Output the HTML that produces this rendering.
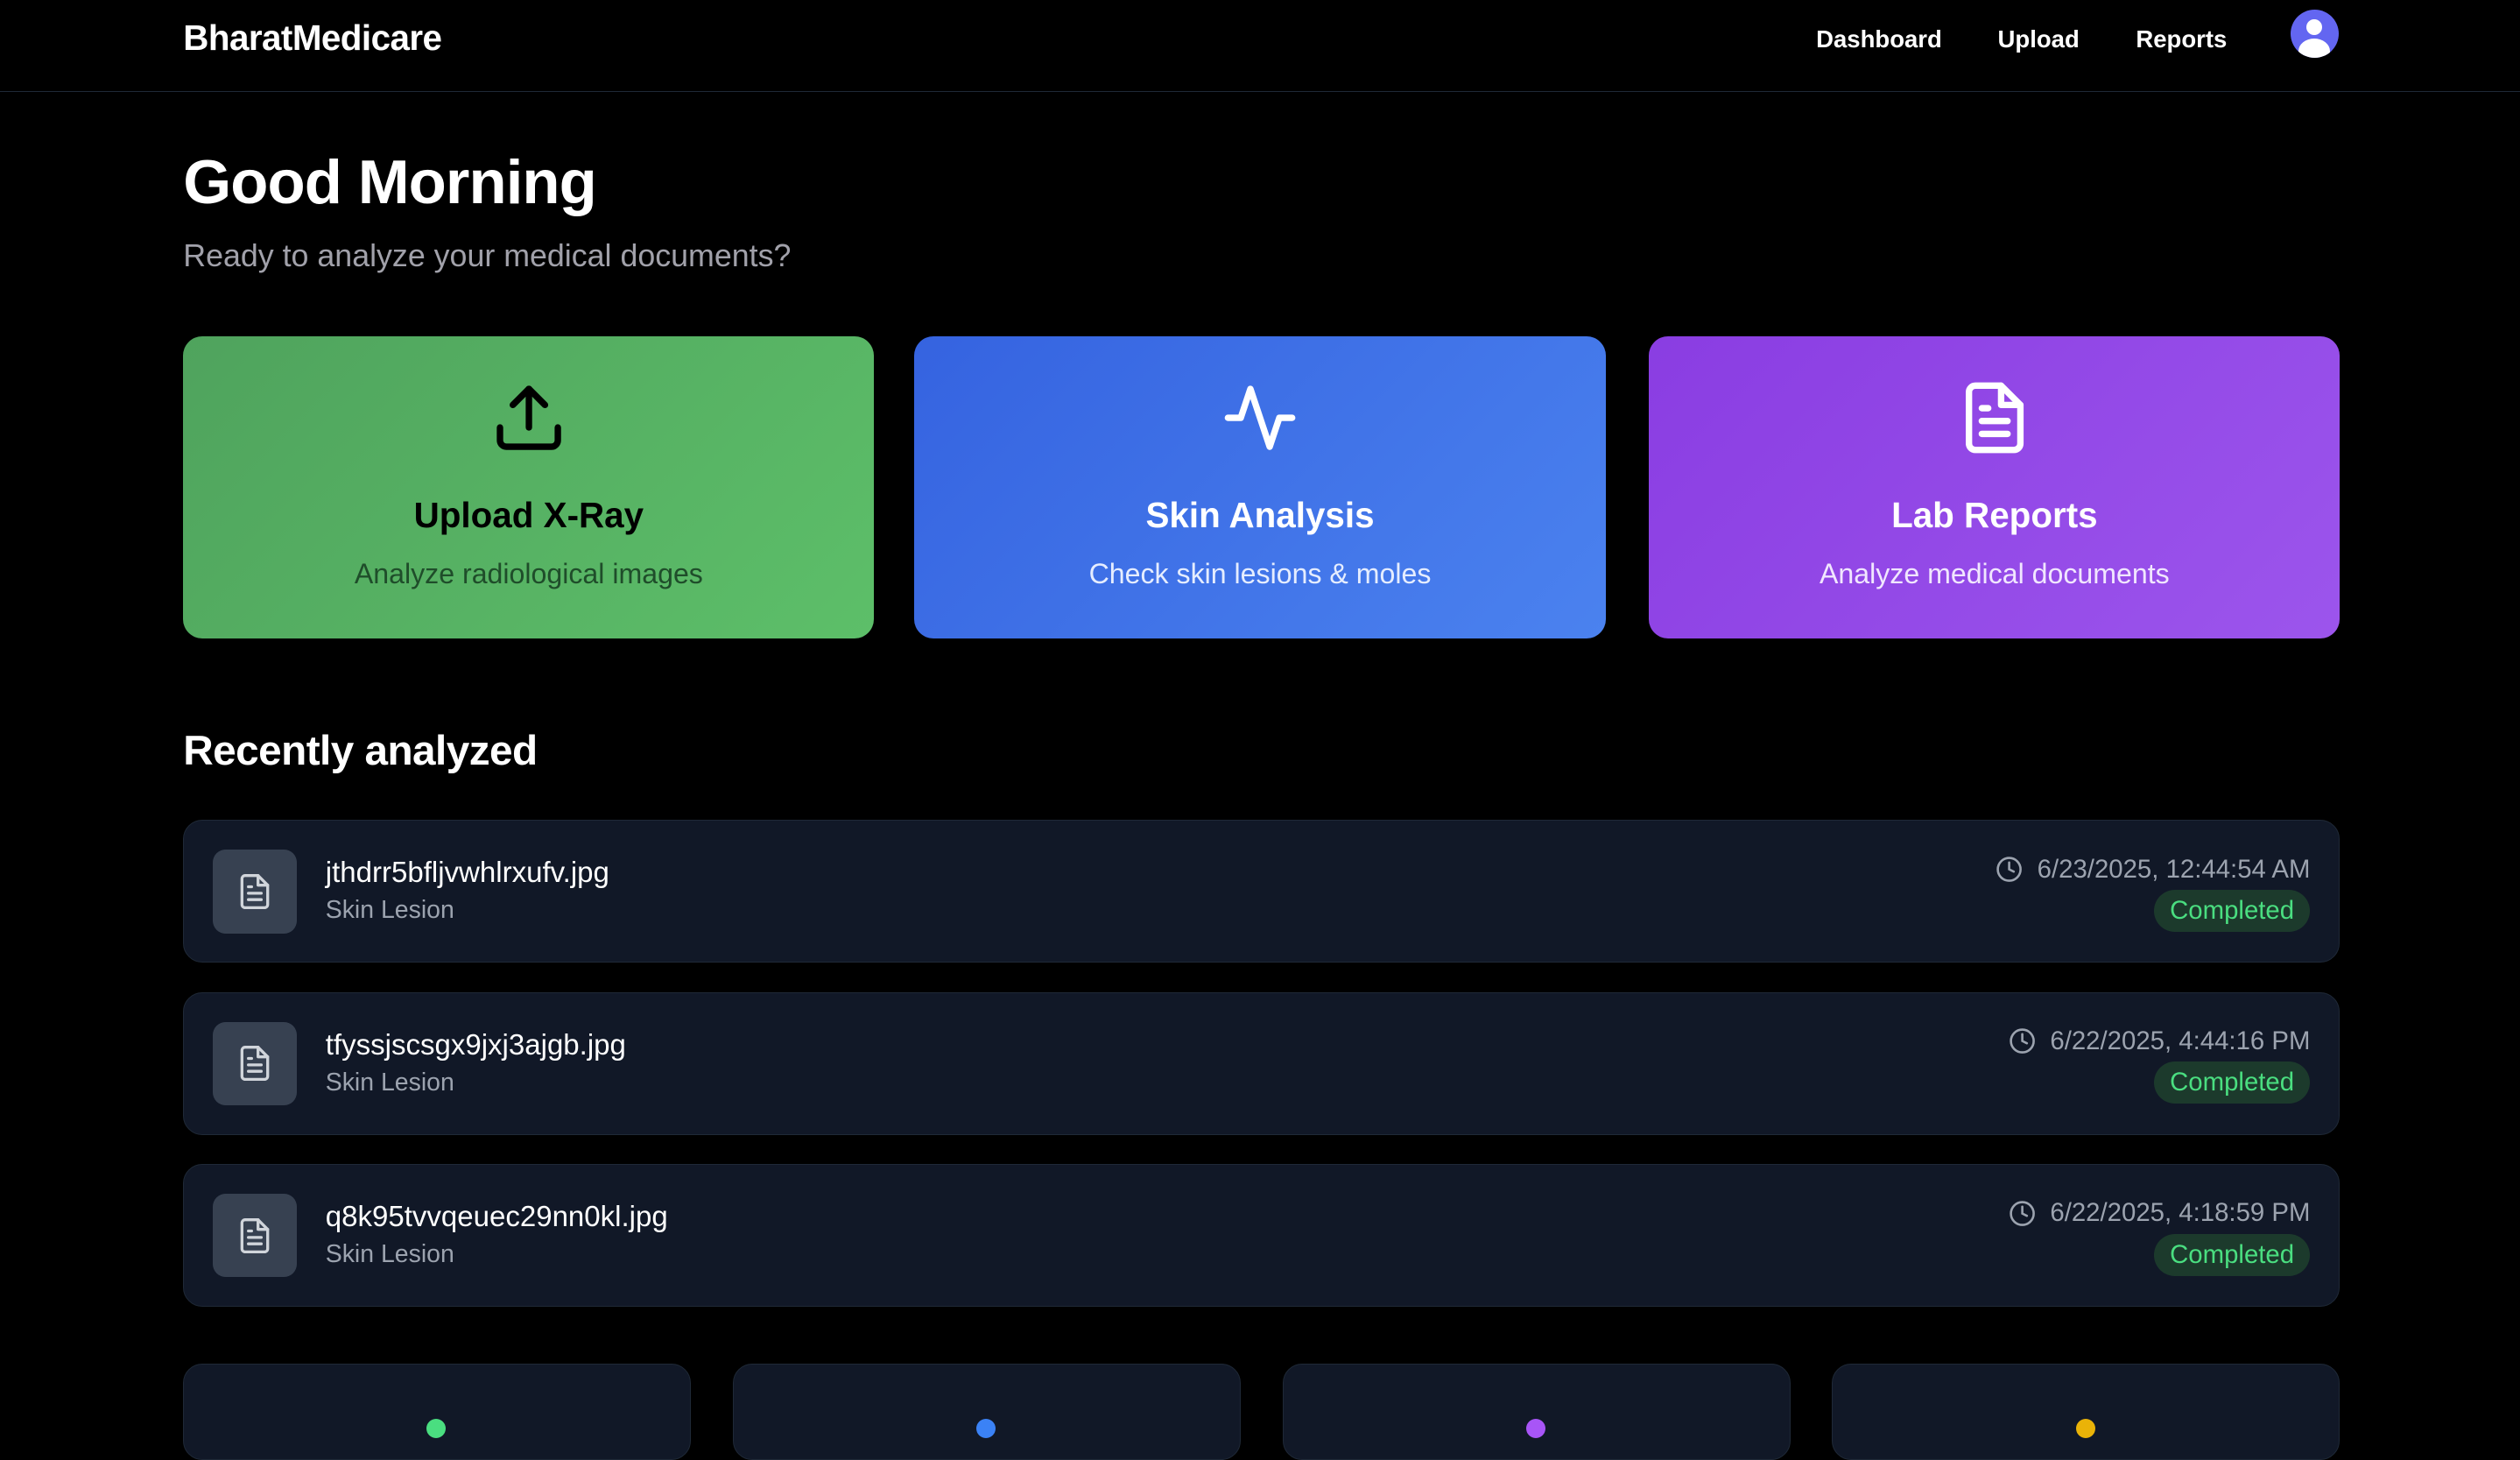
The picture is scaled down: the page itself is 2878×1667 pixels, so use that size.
<!DOCTYPE html>
<html><head><meta charset="utf-8"><style>
html{zoom:1.8355}
*{box-sizing:border-box;margin:0;padding:0}
body{background:#000;width:1568px;height:884px;overflow:hidden;font-family:"Liberation Sans",sans-serif;color:#fff;position:relative}
.nav{position:absolute;left:0;top:0;width:1568px;height:57px;border-bottom:1px solid #1f2937}
.logo{position:absolute;left:114px;top:11px;font-size:22px;font-weight:bold;letter-spacing:-0.3px}
.nl{position:absolute;top:16px;font-size:15px;font-weight:bold}
.av{position:absolute;left:1425px;top:6px;width:30px;height:30px;border-radius:50%;background:#6366f1;overflow:hidden}
h1{position:absolute;left:114px;top:91px;font-size:38.5px;font-weight:bold;letter-spacing:-0.5px}
.sub{position:absolute;left:114px;top:148px;font-size:19.5px;color:#a1a1aa}
.card{position:absolute;top:209px;width:430px;height:188px;border-radius:12px;text-align:center}
.card svg{position:absolute;left:191px;top:27px}
.card .t{position:absolute;left:0;right:0;top:99px;font-size:22px;font-weight:bold}
.card .s{position:absolute;left:0;right:0;top:138px;font-size:17.5px}
h2{position:absolute;left:114px;top:452px;font-size:26px;font-weight:bold;letter-spacing:-0.3px}
.row{position:absolute;left:114px;width:1342px;height:89px;background:#111827;border:1px solid #1f2937;border-radius:12px}
.ib{position:absolute;left:18px;top:18px;width:52px;height:52px;border-radius:8px;background:#374151}
.ib svg{position:absolute;left:14px;top:14px}
.fn{position:absolute;left:88px;top:22px;font-size:18px}
.ft{position:absolute;left:88px;top:47px;font-size:15.5px;color:#9ca3af}
.dt{position:absolute;right:18px;top:21px;font-size:16px;color:#9ca3af;display:flex;align-items:center;gap:9px}
.bd{position:absolute;right:18px;top:43px;height:26px;padding:0 10px;line-height:26px;border-radius:13px;background:#1c3a2c;color:#4ade80;font-size:16px}
.bc{position:absolute;top:848px;width:316px;height:60px;background:#111827;border:1px solid #1f2937;border-radius:12px}
.dot{position:absolute;left:151px;top:34px;width:12px;height:12px;border-radius:50%}
</style></head><body>
<div class="nav">
<div class="logo">BharatMedicare</div>
<div class="nl" style="left:1130px">Dashboard</div>
<div class="nl" style="left:1243px">Upload</div>
<div class="nl" style="left:1329px">Reports</div>
<div class="av"><div style="position:absolute;left:10px;top:6px;width:10px;height:10px;border-radius:50%;background:#fff"></div><div style="position:absolute;left:5px;top:18px;width:20px;height:16px;border-radius:50%;background:#fff"></div></div>
</div>
<h1>Good Morning</h1>
<div class="sub">Ready to analyze your medical documents?</div>

<div class="card" style="left:114px;background:linear-gradient(135deg,#4fa35d,#5dbf69);color:#000">
<svg width="48" height="48" viewBox="0 0 24 24" fill="none" stroke="#000" stroke-width="2" stroke-linecap="round" stroke-linejoin="round"><path d="M21 15v4a2 2 0 0 1-2 2H5a2 2 0 0 1-2-2v-4"/><path d="M17 8l-5-5-5 5"/><path d="M12 3v12"/></svg>
<div class="t">Upload X-Ray</div><div class="s" style="color:#1f4d2a">Analyze radiological images</div></div>
<div class="card" style="left:569px;background:linear-gradient(135deg,#3563e0,#4b82ef)">
<svg width="48" height="48" viewBox="0 0 24 24" fill="none" stroke="#fff" stroke-width="2" stroke-linecap="round" stroke-linejoin="round"><path d="M22 12h-4l-3 9L9 3l-3 9H2"/></svg>
<div class="t">Skin Analysis</div><div class="s" style="color:#e5edff">Check skin lesions &amp; moles</div></div>
<div class="card" style="left:1026px;background:linear-gradient(135deg,#8a3de2,#9c55ec)">
<svg width="48" height="48" viewBox="0 0 24 24" fill="none" stroke="#fff" stroke-width="2" stroke-linecap="round" stroke-linejoin="round"><path d="M14 2H6a2 2 0 0 0-2 2v16a2 2 0 0 0 2 2h12a2 2 0 0 0 2-2V8z"/><path d="M14 2v6h6"/><path d="M16 13H8M16 17H8M10 9H8"/></svg>
<div class="t">Lab Reports</div><div class="s" style="color:#f1e6ff">Analyze medical documents</div></div>

<h2>Recently analyzed</h2>

<div class="row" style="top:510px"><div class="ib"><svg width="24" height="24" viewBox="0 0 24 24" fill="none" stroke="#d1d5db" stroke-width="1.8" stroke-linecap="round" stroke-linejoin="round"><path d="M14 2H6a2 2 0 0 0-2 2v16a2 2 0 0 0 2 2h12a2 2 0 0 0 2-2V8z"/><path d="M14 2v6h6"/><path d="M16 13H8M16 17H8M10 9H8"/></svg></div>
<div class="fn">jthdrr5bfljvwhlrxufv.jpg</div><div class="ft">Skin Lesion</div>
<div class="dt"><svg width="17" height="17" viewBox="0 0 24 24" fill="none" stroke="#9ca3af" stroke-width="2" stroke-linecap="round"><circle cx="12" cy="12" r="10"/><path d="M12 6v6l4 2"/></svg>6/23/2025, 12:44:54 AM</div><div class="bd">Completed</div></div>

<div class="row" style="top:617px"><div class="ib"><svg width="24" height="24" viewBox="0 0 24 24" fill="none" stroke="#d1d5db" stroke-width="1.8" stroke-linecap="round" stroke-linejoin="round"><path d="M14 2H6a2 2 0 0 0-2 2v16a2 2 0 0 0 2 2h12a2 2 0 0 0 2-2V8z"/><path d="M14 2v6h6"/><path d="M16 13H8M16 17H8M10 9H8"/></svg></div>
<div class="fn">tfyssjscsgx9jxj3ajgb.jpg</div><div class="ft">Skin Lesion</div>
<div class="dt"><svg width="17" height="17" viewBox="0 0 24 24" fill="none" stroke="#9ca3af" stroke-width="2" stroke-linecap="round"><circle cx="12" cy="12" r="10"/><path d="M12 6v6l4 2"/></svg>6/22/2025, 4:44:16 PM</div><div class="bd">Completed</div></div>

<div class="row" style="top:724px"><div class="ib"><svg width="24" height="24" viewBox="0 0 24 24" fill="none" stroke="#d1d5db" stroke-width="1.8" stroke-linecap="round" stroke-linejoin="round"><path d="M14 2H6a2 2 0 0 0-2 2v16a2 2 0 0 0 2 2h12a2 2 0 0 0 2-2V8z"/><path d="M14 2v6h6"/><path d="M16 13H8M16 17H8M10 9H8"/></svg></div>
<div class="fn">q8k95tvvqeuec29nn0kl.jpg</div><div class="ft">Skin Lesion</div>
<div class="dt"><svg width="17" height="17" viewBox="0 0 24 24" fill="none" stroke="#9ca3af" stroke-width="2" stroke-linecap="round"><circle cx="12" cy="12" r="10"/><path d="M12 6v6l4 2"/></svg>6/22/2025, 4:18:59 PM</div><div class="bd">Completed</div></div>

<div class="bc" style="left:114px"><div class="dot" style="background:#4ade80"></div></div>
<div class="bc" style="left:456px"><div class="dot" style="background:#3b82f6"></div></div>
<div class="bc" style="left:798px"><div class="dot" style="background:#a855f7"></div></div>
<div class="bc" style="left:1140px"><div class="dot" style="background:#eab308"></div></div>
</body></html>
